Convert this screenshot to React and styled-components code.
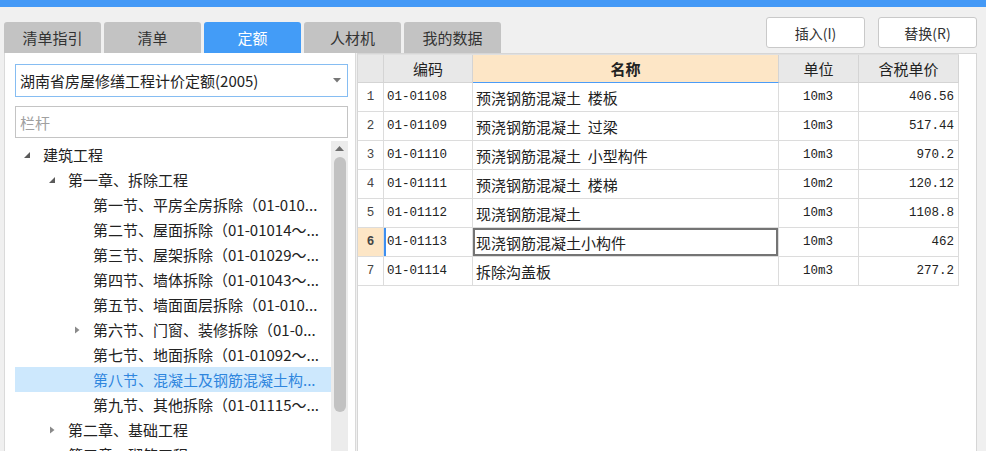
import React from 'react'
import styled, { createGlobalStyle } from 'styled-components'

const GlobalStyle = createGlobalStyle`
  *, *::before, *::after { box-sizing: border-box; }
  html, body {
    margin: 0;
    padding: 0;
    height: 100%;
    overflow: hidden;
  }
  body {
    background: #f0f0f0;
    font-family: "Noto Sans CJK SC", "Liberation Sans", sans-serif;
    color: #222;
  }
  #root { height: 100%; }
`;

const tabs = ['清单指引', '清单', '定额', '人材机', '我的数据'];

const tree = [
  { level: 0, label: '建筑工程', toggle: 'open' },
  { level: 1, label: '第一章、拆除工程', toggle: 'open' },
  { level: 2, label: '第一节、平房全房拆除（01-010...' },
  { level: 2, label: '第二节、屋面拆除（01-01014～...' },
  { level: 2, label: '第三节、屋架拆除（01-01029～...' },
  { level: 2, label: '第四节、墙体拆除（01-01043～...' },
  { level: 2, label: '第五节、墙面面层拆除（01-010...' },
  { level: 2, label: '第六节、门窗、装修拆除（01-0...', toggle: 'closed' },
  { level: 2, label: '第七节、地面拆除（01-01092～...' },
  { level: 2, label: '第八节、混凝土及钢筋混凝土构...', selected: true },
  { level: 2, label: '第九节、其他拆除（01-01115～...' },
  { level: 1, label: '第二章、基础工程', toggle: 'closed' },
  { level: 1, label: '第三章、砌筑工程', toggle: 'closed' },
];

const rows = [
  { no: 1, code: '01-01108', name: '预浇钢筋混凝土  楼板', unit: '10m3', price: '406.56' },
  { no: 2, code: '01-01109', name: '预浇钢筋混凝土  过梁', unit: '10m3', price: '517.44' },
  { no: 3, code: '01-01110', name: '预浇钢筋混凝土  小型构件', unit: '10m3', price: '970.2' },
  { no: 4, code: '01-01111', name: '预浇钢筋混凝土  楼梯', unit: '10m2', price: '120.12' },
  { no: 5, code: '01-01112', name: '现浇钢筋混凝土', unit: '10m3', price: '1108.8' },
  { no: 6, code: '01-01113', name: '现浇钢筋混凝土小构件', unit: '10m3', price: '462', current: true },
  { no: 7, code: '01-01114', name: '拆除沟盖板', unit: '10m3', price: '277.2' },
];

const Toggle = ({ kind }) => {
  if (kind === 'open') {
    return (
      <svg width="8" height="8" viewBox="0 0 8 8">
        <path d="M7 1 L7 7 L1 7 Z" fill="#5a5a5a" />
      </svg>
    );
  }
  if (kind === 'closed') {
    return (
      <svg width="8" height="8" viewBox="0 0 8 8">
        <path d="M2 0.5 L6.5 4 L2 7.5 Z" fill="#8a8a8a" />
      </svg>
    );
  }
  return null;
};

const App = () => {
  return (
    <Page>
      <GlobalStyle />
      <TopBar />
      <Body>
        <Header>
          <Tabs>
            {tabs.map((t) => (
              <Tab key={t} $active={t === '定额'}>{t}</Tab>
            ))}
          </Tabs>
          <Actions>
            <Button>插入(I)</Button>
            <Button>替换(R)</Button>
          </Actions>
        </Header>
        <Main>
          <LeftPanel>
            <Select>
              <span>湖南省房屋修缮工程计价定额(2005)</span>
              <svg width="8" height="5" viewBox="0 0 8 5">
                <path d="M0 0 L8 0 L4 4.5 Z" fill="#777" />
              </svg>
            </Select>
            <Search placeholder="栏杆" />
            <TreeArea>
              <TreeList>
                {tree.map((n, i) => (
                  <TreeRow key={i} $level={n.level} $selected={n.selected}>
                    <ToggleBox><Toggle kind={n.toggle} /></ToggleBox>
                    <TreeLabel>{n.label}</TreeLabel>
                  </TreeRow>
                ))}
              </TreeList>
              <ScrollTrack>
                <ScrollArrow>
                  <svg width="9" height="5" viewBox="0 0 9 5">
                    <path d="M0 5 L4.5 0 L9 5 Z" fill="#6e6e6e" />
                  </svg>
                </ScrollArrow>
                <ScrollThumb />
              </ScrollTrack>
            </TreeArea>
          </LeftPanel>
          <RightPanel>
            <Grid>
              <HeadCell />
              <HeadCell>编码</HeadCell>
              <HeadCell $accent>名称</HeadCell>
              <HeadCell>单位</HeadCell>
              <HeadCell>含税单价</HeadCell>
              {rows.map((r) => (
                <React.Fragment key={r.no}>
                  <NoCell $current={r.current}>{r.no}</NoCell>
                  <Cell $mono $current={r.current}>{r.code}</Cell>
                  <Cell $focused={r.current}>{r.name}</Cell>
                  <Cell $mono $align="center">{r.unit}</Cell>
                  <Cell $mono $align="right">{r.price}</Cell>
                </React.Fragment>
              ))}
            </Grid>
          </RightPanel>
        </Main>
      </Body>
    </Page>
  );
};

const Page = styled.div`
  height: 100%;
  display: flex;
  flex-direction: column;
`;

const TopBar = styled.div`
  height: 7px;
  background: #4499f6;
  flex: none;
`;

const Body = styled.div`
  flex: 1;
  display: flex;
  flex-direction: column;
  padding: 0 9px 0 4px;
  min-height: 0;
`;

const Header = styled.div`
  height: 46px;
  display: flex;
  justify-content: space-between;
  flex: none;
`;

const Tabs = styled.div`
  display: flex;
  gap: 3px;
  align-self: flex-end;
`;

const Tab = styled.div`
  width: 97px;
  height: 31px;
  display: flex;
  align-items: center;
  justify-content: center;
  border-radius: 3px 3px 0 0;
  font-size: 15px;
  background: ${(p) => (p.$active ? '#439cf7' : '#c3c3c3')};
  color: ${(p) => (p.$active ? '#fff' : '#333')};
`;

const Actions = styled.div`
  display: flex;
  gap: 13px;
  margin-top: 10px;
`;

const Button = styled.div`
  width: 99px;
  height: 31px;
  border: 1px solid #c9c9c9;
  border-radius: 3px;
  background: #fff;
  display: flex;
  align-items: center;
  justify-content: center;
  font-size: 14px;
  color: #333;
`;

const Main = styled.div`
  flex: 1;
  display: flex;
  gap: 1px;
  min-height: 0;
`;

const LeftPanel = styled.div`
  width: 352px;
  flex: none;
  background: #fff;
  border-left: 1px solid #dadada;
  border-right: 1px solid #dadada;
  padding: 11px 7px 0 10px;
  display: flex;
  flex-direction: column;
  min-height: 0;
`;

const Select = styled.div`
  height: 33px;
  flex: none;
  border: 1px solid #86bdf2;
  display: flex;
  align-items: center;
  justify-content: space-between;
  padding: 0 6px 0 4px;
  font-size: 15px;
  color: #222;
`;

const Search = styled.input`
  margin-top: 9px;
  height: 32px;
  flex: none;
  border: 1px solid #c4c4c4;
  padding: 0 4px;
  font-family: inherit;
  font-size: 15px;
  outline: none;
  &::placeholder { color: #a0a0a0; }
`;

const TreeArea = styled.div`
  flex: 1;
  display: flex;
  margin-top: 3px;
  min-height: 0;
  overflow: hidden;
`;

const TreeList = styled.div`
  flex: 1;
  padding-top: 1px;
  min-width: 0;
`;

const TreeRow = styled.div`
  height: 25px;
  display: flex;
  align-items: center;
  padding-left: ${(p) => p.$level * 25}px;
  background: ${(p) => (p.$selected ? '#cde8fd' : 'transparent')};
  color: ${(p) => (p.$selected ? '#2f86de' : '#222')};
  font-size: 15px;
  white-space: nowrap;
`;

const ToggleBox = styled.div`
  width: 28px;
  padding-left: 8px;
  display: flex;
  align-items: center;
  flex: none;
`;

const TreeLabel = styled.span`
  overflow: hidden;
`;

const ScrollTrack = styled.div`
  width: 17px;
  background: #ececec;
  display: flex;
  flex-direction: column;
  align-items: center;
  flex: none;
`;

const ScrollArrow = styled.div`
  height: 15px;
  display: flex;
  align-items: center;
  justify-content: center;
`;

const ScrollThumb = styled.div`
  margin-top: 1px;
  width: 12px;
  height: 255px;
  border-radius: 6px;
  background: #c2c2c2;
`;

const RightPanel = styled.div`
  flex: 1;
  background: #fff;
  border: 1px solid #d6d6d6;
  border-bottom: none;
`;

const Grid = styled.div`
  display: grid;
  grid-template-columns: 26px 89px 306px 80px 100px;
  grid-auto-rows: 29px;
  grid-template-rows: 28px;
  width: 601px;
  border-top: 1px solid #e0e0e0;
`;

const HeadCell = styled.div`
  display: flex;
  align-items: center;
  justify-content: center;
  font-size: 15px;
  font-weight: ${(p) => (p.$accent ? 700 : 400)};
  background: ${(p) => (p.$accent ? '#fde6c6' : '#e8e8e8')};
  border-right: 1px solid #d4d4d4;
  border-bottom: 1px solid ${(p) => (p.$accent ? '#4a9cf8' : '#d4d4d4')};
  color: #222;
`;

const Cell = styled.div`
  display: flex;
  align-items: center;
  justify-content: ${(p) => (p.$align === 'center' ? 'center' : p.$align === 'right' ? 'flex-end' : 'flex-start')};
  padding: 0 4px 0 3px;
  border-right: 1px solid #dcdcdc;
  border-bottom: 1px solid #dcdcdc;
  white-space: pre;
  font-family: ${(p) => (p.$mono ? '"Liberation Mono", monospace' : 'inherit')};
  font-size: ${(p) => (p.$mono ? '12.5px' : '15px')};
  color: #222;
  box-shadow: ${(p) =>
    p.$focused ? 'inset 0 0 0 2px #747474' : p.$current ? 'inset 2px 0 0 #3d8ff0' : 'none'};
`;

const NoCell = styled.div`
  display: flex;
  align-items: center;
  justify-content: center;
  border-right: 1px solid #dcdcdc;
  border-bottom: 1px solid #dcdcdc;
  font-family: "Liberation Mono", monospace;
  font-size: 12.5px;
  font-weight: ${(p) => (p.$current ? 700 : 400)};
  background: ${(p) => (p.$current ? '#fde6c6' : '#fff')};
  color: #444;
`;

export default App
